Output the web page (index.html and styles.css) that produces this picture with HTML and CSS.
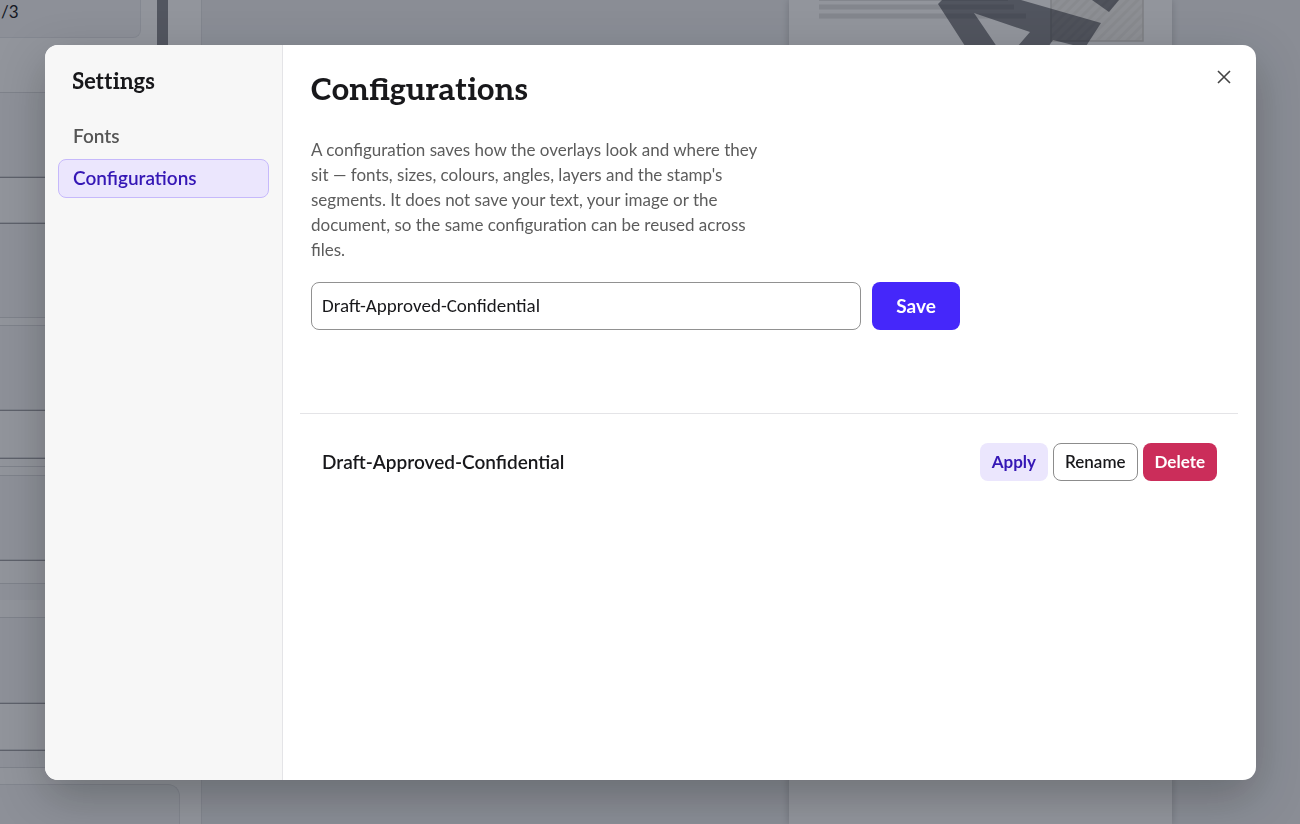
FILE: index.html
```html
<!DOCTYPE html>
<html lang="en">
<head>
<meta charset="utf-8">
<title>Settings</title>
<meta name="viewport" content="width=device-width, initial-scale=1">
<link rel="stylesheet" href="styles.css">
</head>
<body>
<div class="app" aria-hidden="true">
  <div class="panel">
    <div class="page-count">/3<span class="scroll-thumb"></span></div>
    <div class="block h55"></div>
    <div class="block shade h84"></div>
    <div class="block strong h46"></div>
    <div class="block strong shade h95"></div>
    <div class="block h8"></div>
    <div class="block shade h84"></div>
    <div class="block strong h48"></div>
    <div class="block strong h9"></div>
    <div class="block h9"></div>
    <div class="block shade h84"></div>
    <div class="block strong h24"></div>
    <div class="block plain shade h16"></div>
    <div class="block h18"></div>
    <div class="block shade h85"></div>
    <div class="block strong h47"></div>
    <div class="block strong shade h18"></div>
    <div class="block plain h16"></div>
    <div class="last-card"></div>
  </div>
  <div class="canvas">
    <div class="sheet">
      <svg class="drawing" width="383" height="60" viewBox="0 0 383 60">
        <defs>
          <pattern id="hatch" width="7" height="7" patternUnits="userSpaceOnUse" patternTransform="rotate(45)">
            <rect width="7" height="7" fill="#f6f4f0"/>
            <rect width="3" height="7" fill="#edebe6"/>
          </pattern>
        </defs>
        <path d="M30 0H219" stroke="#e4e4e4" stroke-width="2"/>
        <path d="M30 7H225M30 16H237" stroke="#e4e4e4" stroke-width="5"/>
        <rect x="262" y="-20" width="92" height="61" fill="url(#hatch)" stroke="#d8d6d1" stroke-width="1.500"/>
        <path fill="#12141d" fill-opacity=".5" fill-rule="evenodd" d="M153 0H232L312 23L288 60V46L264 40L250 60H185L149 4ZM185 13L217 60L241 32Z"/>
        <path d="M303 0H330L320 12Z" fill="#12141d" fill-opacity=".5"/>
      </svg>
    </div>
  </div>
</div>

<div class="overlay">
  <section class="dialog" role="dialog" aria-modal="true" aria-labelledby="settings-title">
    <aside class="sidebar">
      <h2 class="sidebar-title" id="settings-title">Settings</h2>
      <nav class="menu">
        <button class="menu-item" type="button">Fonts</button>
        <button class="menu-item active" type="button" aria-current="page">Configurations</button>
      </nav>
    </aside>
    <main class="content">
      <header class="content-head">
        <h1 class="title">Configurations</h1>
        <button class="close" type="button" aria-label="Close">
          <svg width="14" height="14" viewBox="0 0 14 14" fill="none" stroke="currentColor" stroke-width="1.600"><path d="M1 1L13 13M13 1L1 13"/></svg>
        </button>
      </header>
      <p class="intro">A configuration saves how the overlays look and where they sit — fonts, sizes, colours, angles, layers and the stamp's segments. It does not save your text, your image or the document, so the same configuration can be reused across files.</p>
      <form class="save-row">
        <input class="name-input" type="text" aria-label="Configuration name" value="Draft-Approved-Confidential">
        <button class="btn save" type="button">Save</button>
      </form>
      <ul class="list">
        <li class="item">
          <span class="item-name">Draft-Approved-Confidential</span>
          <div class="actions">
            <button class="btn apply" type="button">Apply</button>
            <button class="btn rename" type="button">Rename</button>
            <button class="btn delete" type="button">Delete</button>
          </div>
        </li>
      </ul>
    </main>
  </section>
</div>
</body>
</html>
```

FILE: styles.css
```css
* { box-sizing: border-box; }
body {
  margin: 0;
  height: 100vh;
  overflow: hidden;
  font-family: Lato, Carlito, "Liberation Sans", sans-serif;
  color: #18181b;
}
button, input { font: inherit; color: inherit; margin: 0; }
button { cursor: pointer; }

/* Editor behind the dialog */
.app { display: flex; height: 100vh; background: #f0f1f3; overflow: hidden; }
.panel {
  flex: none;
  width: 202px;
  background: #fff;
  border-right: 1px solid #e2e3e6;
}
.page-count {
  position: relative;
  width: 141px;
  height: 38px;
  padding: 0 1px;
  font-size: 17px;
  line-height: 24px;
  background: #f5f6f7;
  border: solid #e6e7ea;
  border-width: 0 1px 1px 0;
  border-radius: 0 0 8px 0;
}
.scroll-thumb { position: absolute; left: 157px; top: 0; width: 11px; height: 60px; background: #8a8b90; }
.block { width: 179px; border-bottom: 1px solid #dcdde0; }
.block.shade { background: #f7f8f9; }
.block.strong { border-top: 1px solid #a0a1a6; }
.block.plain { border: 0; }
.h8 { height: 8px; }
.h9 { height: 9px; }
.h16 { height: 16px; }
.h18 { height: 18px; }
.h24 { height: 24px; }
.h46 { height: 46px; }
.h47 { height: 47px; }
.h48 { height: 48px; }
.h55 { height: 55px; }
.h84 { height: 84px; }
.h85 { height: 85px; }
.h95 { height: 95px; }
.last-card {
  width: 180px;
  height: 60px;
  background: #f5f6f7;
  border: solid #e2e3e6;
  border-width: 1px 1px 0 0;
  border-radius: 0 12px 0 0;
}
.canvas { flex: 1; padding-right: 128px; display: flex; justify-content: flex-end; }
.sheet { width: 383px; background: #fff; box-shadow: 0 0 8px rgba(0, 0, 0, .2); }
.drawing { display: block; }

/* Dialog */
.overlay {
  position: fixed;
  inset: 0;
  display: flex;
  padding: 45px 44px 44px 45px;
  background: rgba(17, 24, 39, .46);
}
.dialog {
  flex: 1;
  display: flex;
  background: #fff;
  border-radius: 13px;
  overflow: hidden;
  box-shadow: 0 16px 48px rgba(0, 0, 0, .25);
}
.sidebar {
  flex: none;
  width: 238px;
  padding: 20px 13px;
  background: #f7f7f7;
  border-right: 1px solid #e4e4e7;
}
.sidebar-title, .title { margin: 0; font-family: Aleo, "Liberation Serif", serif; font-weight: 700; }
.sidebar-title { padding: 0 14px; font-size: 22px; line-height: 34px; }
.menu { display: flex; flex-direction: column; gap: 3px; margin-top: 18px; }
.menu-item {
  height: 39px;
  padding: 0 14px 2px;
  text-align: left;
  font-size: 19px;
  font-weight: 600;
  color: #555;
  background: none;
  border: 1px solid transparent;
  border-radius: 8px;
}
.menu-item.active { color: #3517b5; background: #ebe6fd; border-color: #c6b9fb; }
.content { flex: 1; min-width: 0; padding: 20px 18px 20px 28px; }
.content-head { display: flex; justify-content: space-between; align-items: flex-start; }
.title { font-size: 31px; line-height: 52px; }
.close {
  display: grid;
  place-items: center;
  width: 28px;
  height: 24px;
  padding: 0;
  color: #444;
  background: none;
  border: 0;
}
.intro {
  max-width: 460px;
  margin: 20px 0 0;
  font-size: 17px;
  line-height: 25px;
  color: #5c5c5c;
}
.save-row { display: flex; gap: 11px; max-width: 649px; margin-top: 20px; }
.name-input {
  flex: 1;
  min-width: 0;
  height: 48px;
  padding: 0 10px 2px;
  font-family: Carlito, Lato, sans-serif;
  font-size: 19px;
  background: #fff;
  border: 1px solid #919191;
  border-radius: 8px;
}
.btn { border: 1px solid transparent; border-radius: 8px; font-weight: 700; }
.save { width: 88px; padding: 0 0 2px; font-size: 19px; color: #fff; background: #4527fa; }
.list { list-style: none; margin: 83px 0 0 -11px; padding: 0; border-top: 1px solid #e4e4e7; }
.item { display: flex; align-items: center; justify-content: space-between; padding: 29px 21px 29px 22px; }
.item-name { padding-bottom: 2px; font-size: 19px; font-weight: 600; }
.actions { display: flex; gap: 5px; }
.actions .btn { height: 38px; padding: 0 11px 2px; font-size: 17px; }
.actions .apply { color: #3517b5; background: #ebe6fd; }
.actions .rename { font-weight: 600; background: #fff; border-color: #8c8c8c; }
.actions .delete { color: #fff; background: #cb2d5a; }
```
